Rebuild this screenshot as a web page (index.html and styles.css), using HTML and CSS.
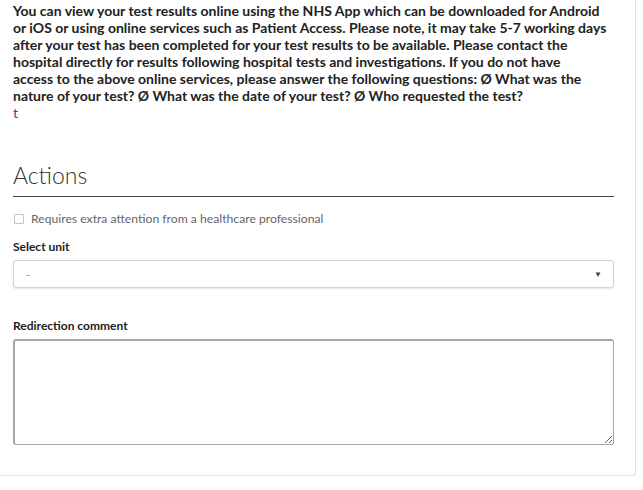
FILE: index.html
```html
<!DOCTYPE html>
<html>
<head>
    <meta charset="utf-8" />
    <meta name="viewport" content="width=device-width, initial-scale=1.0" />
    <title>Test result actions</title>
    <link rel="stylesheet" href="styles.css">
</head>
<body>
    <div class="card">
        <p class="message">You can view your test results online using the NHS App which can be downloaded for Android<br>
            or iOS or using online services such as Patient Access. Please note, it may take 5-7 working days<br>
            after your test has been completed for your test results to be available. Please contact the<br>
            hospital directly for results following hospital tests and investigations. If you do not have<br>
            access to the above online services, please answer the following questions: Ø What was the<br>
            nature of your test? Ø What was the date of your test? Ø Who requested the test?</p>
        <p class="sign-off">t</p>

        <h2 class="section-title">Actions</h2>

        <label class="check-row">
            <input type="checkbox" class="check-box">
            <span>Requires extra attention from a healthcare professional</span>
        </label>

        <div class="field">
            <label class="field-label" for="unit">Select unit</label>
            <div class="select-box">
                <select id="unit" class="unit-select">
                    <option>-</option>
                </select>
                <span class="select-arrow">&#9660;</span>
            </div>
        </div>

        <div class="field field-comment">
            <label class="field-label" for="comment">Redirection comment</label>
            <textarea id="comment" class="comment-input"></textarea>
        </div>
    </div>
</body>
</html>
```
FILE: styles.css
```css
body {
    margin: 0;
    background: #ffffff;
    font-family: Lato, 'Open Sans', sans-serif;
    color: #222;
}
.card {
    width: 601px;
    margin-left: -1px;
    padding: 0 21px 30px 13px;
    background: #fff;
    border: 1px solid #e2e2e2;
    border-top: none;
    border-radius: 0 0 3px 0;
    box-shadow: 0 1px 2px rgba(0,0,0,0.05);
}
.message {
    margin: 0;
    padding-top: 2px;
    font-size: 14px;
    font-weight: 700;
    line-height: 17px;
    color: #222;
    white-space: nowrap;
}
.sign-off {
    margin: 0;
    font-size: 14px;
    line-height: 17px;
    color: #2f4f7a;
}
.section-title {
    margin: 40px 0 0;
    padding-bottom: 7px;
    font-size: 23px;
    font-weight: 300;
    color: #333;
    border-bottom: 1px solid #444;
}
.check-row {
    display: flex;
    align-items: center;
    gap: 7px;
    margin-top: 14px;
    font-size: 12.2px;
    color: #666;
}
.check-box {
    appearance: none;
    margin: 0 0 0 1px;
    width: 10px;
    height: 10px;
    border: 1px solid #c4c4c4;
    border-radius: 1px;
    background: #fff;
}
.field {
    margin-top: 13px;
}
.field-label {
    display: block;
    font-size: 12px;
    font-weight: 700;
    color: #222;
    margin-bottom: 6px;
}
.select-box {
    position: relative;
}
.unit-select {
    width: 100%;
    height: 28px;
    padding: 0 12px;
    border: 1px solid #cfd2d7;
    border-radius: 3px;
    background: #fff;
    box-shadow: 0 1px 2px rgba(0,0,0,0.1);
    font-family: inherit;
    font-size: 12px;
    color: #999;
    appearance: none;
}
.select-arrow {
    position: absolute;
    right: 12px;
    top: 9px;
    font-size: 8px;
    color: #444;
    pointer-events: none;
}
.field-comment {
    margin-top: 30px;
}
.comment-input {
    display: block;
    box-sizing: border-box;
    width: 100%;
    height: 106px;
    border: 1px solid #a3a7b0;
    border-top-width: 2px;
    border-left-width: 2px;
    border-radius: 3px;
    font-family: inherit;
}
```
